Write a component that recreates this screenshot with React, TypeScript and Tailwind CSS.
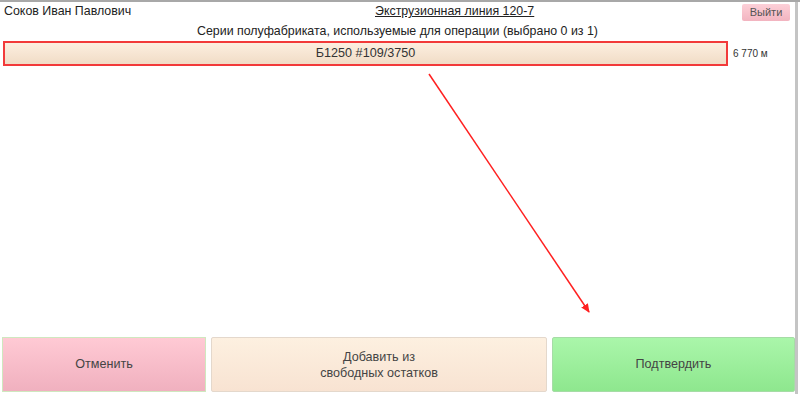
import React from 'react';

const font = { fontFamily: '"Liberation Sans", Arial, sans-serif' };

export default function App() {
  return (
    <div
      className="relative flex h-[394px] w-[800px] overflow-hidden border-t-2 border-[#a8a8a8] bg-white text-[#333]"
      style={font}
    >
      <div className="flex w-[795px] flex-col">
        {/* header */}
        <div className="flex h-[19px] items-center pl-[4px]">
          <span className="w-[371px] text-[12.4px] text-[#222]">Соков Иван Павлович</span>
          <span className="text-[12.4px] text-[#222] underline">Экструзионная линия 120-7</span>
          <div className="flex-1" />
          <button className="mr-[5px] mt-[1px] h-[17px] w-[48px] rounded-[2px] bg-gradient-to-b from-[#fdd0d8] to-[#f2b4c0] text-[11px] text-[#555]">
            Выйти
          </button>
        </div>
        <div className="mt-[3px] text-center text-[12.4px] leading-[15px] text-[#222]">
          Серии полуфабриката, используемые для операции (выбрано 0 из 1)
        </div>
        {/* series row */}
        <div className="mt-[2px] flex items-center pl-[3px]">
          <div className="flex h-[25px] w-[725px] items-center justify-center border-2 border-[#f23a3a] bg-gradient-to-b from-[#fcefe0] to-[#f1dcc6] text-[12.6px] text-[#333]">
            Б1250 #109/3750
          </div>
          <span className="ml-[5px] text-[10px] text-[#333]">6 770 м</span>
        </div>
        <div className="flex-1" />
        {/* buttons */}
        <div className="mb-[2px] flex h-[55px] gap-[5px] pl-[2px]">
          <button className="w-[204px] border border-[#cfe8bf] bg-gradient-to-b from-[#ffcad4] to-[#f0b0bf] text-[12.6px] text-[#444]">
            Отменить
          </button>
          <button className="w-[336px] rounded-[2px] border border-[#e4d8cc] bg-gradient-to-b from-[#fdf0e0] to-[#f8e3d2] text-[12.6px] leading-[16px] text-[#444]">
            Добавить из
            <br />
            свободных остатков
          </button>
          <button className="w-[243px] rounded-[2px] border border-[#a6dca6] bg-gradient-to-b from-[#aaf6aa] to-[#8ee78e] text-[12.6px] text-[#444]">
            Подтвердить
          </button>
        </div>
      </div>
      <div className="h-full w-[3px] bg-[#c4c4c4]" />
      <div className="flex-1" />

      {/* annotation arrow */}
      <svg className="pointer-events-none absolute left-0 top-0" width="800" height="394">
        <defs>
          <marker id="ah" markerWidth="10" markerHeight="10" refX="8" refY="4" orient="auto" markerUnits="userSpaceOnUse">
            <path d="M0,0 L9,4 L0,8 z" fill="#ff2020" />
          </marker>
        </defs>
        <line x1="429" y1="72" x2="589" y2="310" stroke="#ff2020" strokeWidth="1.5" markerEnd="url(#ah)" />
      </svg>
    </div>
  );
}
